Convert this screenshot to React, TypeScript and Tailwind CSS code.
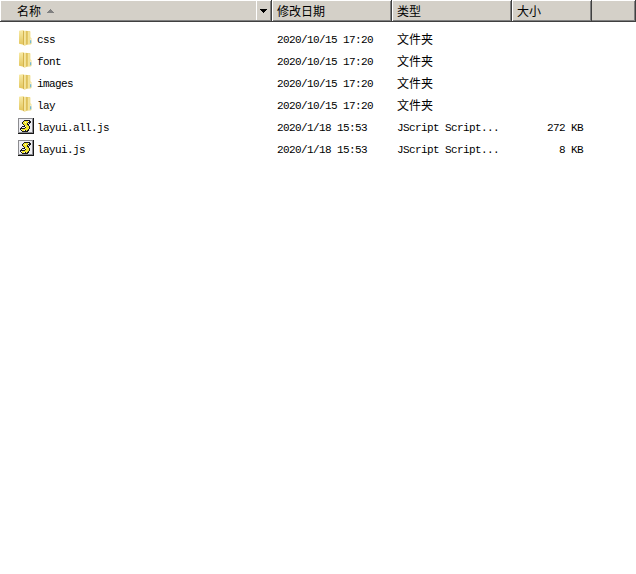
import React from "react";

type Entry = {
  name: string;
  kind: "folder" | "script";
  modified: string;
  type: string;
  size?: string;
};

const entries: Entry[] = [
  { name: "css", kind: "folder", modified: "2020/10/15 17:20", type: "文件夹" },
  { name: "font", kind: "folder", modified: "2020/10/15 17:20", type: "文件夹" },
  { name: "images", kind: "folder", modified: "2020/10/15 17:20", type: "文件夹" },
  { name: "lay", kind: "folder", modified: "2020/10/15 17:20", type: "文件夹" },
  { name: "layui.all.js", kind: "script", modified: "2020/1/18 15:53", type: "JScript Script...", size: "272 KB" },
  { name: "layui.js", kind: "script", modified: "2020/1/18 15:53", type: "JScript Script...", size: "8 KB" },
];

const bevel = "flex h-[22px] shrink-0 items-center border-b border-r border-[#404040] bg-[#d4d0c8]";
const raised = "shadow-[inset_1px_1px_0_#ffffff,inset_-1px_-1px_0_#808080]";
const raisedFlatLeft = "shadow-[inset_0_1px_0_#ffffff,inset_-1px_-1px_0_#808080]";

function FolderIcon() {
  return (
    <svg width="16" height="16" viewBox="0 0 16 16" className="block">
      <defs>
        <linearGradient id="folderFront" x1="0" y1="0" x2="0" y2="1">
          <stop offset="0" stopColor="#f8eba8" />
          <stop offset="1" stopColor="#e3c65c" />
        </linearGradient>
        <linearGradient id="folderBack" x1="0" y1="0" x2="1" y2="0">
          <stop offset="0" stopColor="#dfc25c" />
          <stop offset="1" stopColor="#f5e596" />
        </linearGradient>
      </defs>
      <path d="M1 .8 5.6 0v14.8L1 13.8Z" fill="url(#folderFront)" />
      <path d="M7 1h4.8l.6.6v5.6l1.2 1v5.6l-.6.6H7Z" fill="url(#folderBack)" />
      <path d="M5 1 6.2.4v15.2L5 14.8Z" fill="#d4b34c" />
      <path d="M6.2 1.2 8.4.4v14.5l-2.2 1Z" fill="#f3e192" />
      <path d="M8.4 1h.9v13.7h-.9Z" fill="#d6b64e" />
      <path d="M10.4 1.6h.9v12.6h-.9Z" fill="#f8edb1" />
      <path d="M12.4 8.4h.9v2h-.9Z" fill="#f4f5ed" />
      <path d="M12.2 10.2h1v3h-1Z" fill="#55b0e8" />
    </svg>
  );
}

const scroll = [
  "gggggggggggggggk",
  "gwwwwwwwwwwwwwgk",
  "gwwwwwkkkkkkwwgk",
  "gwwwwkyyyywkkwgk",
  "gwwwkyywyykkkwgk",
  "gwwwkyyyykwkwwgk",
  "gwwwwkyyykkwwwgk",
  "gwwwwwkyyykwwwgk",
  "gwwwkkkwyyykwwgk",
  "gwwkwwwkyyykwwgk",
  "gwkkkkkyyyykwwgk",
  "gwkwyyyyyykwwwgk",
  "gwwkyywkykkwwwgk",
  "gwwwkkkkkkwwwwgk",
  "gggggggggggggggk",
  "kkkkkkkkkkkkkkkk",
];
const ink: Record<string, string> = { g: "#8c8c90", k: "#181818", w: "#eeeef3", y: "#f2e62c" };

function ScriptIcon() {
  return (
    <svg width="16" height="16" viewBox="0 0 16 16" className="block" shapeRendering="crispEdges">
      {scroll.map((row, y) =>
        row.split("").map((cell, x) => <rect key={`${x}-${y}`} x={x} y={y} width="1" height="1" fill={ink[cell]} />)
      )}
    </svg>
  );
}

export default function App() {
  return (
    <div className="h-[574px] w-[636px] overflow-hidden bg-white font-['Liberation_Mono','Noto_Sans_CJK_SC',monospace] text-[11px] tracking-[-0.6px] text-black">
      <header className="flex font-['Noto_Sans_CJK_SC',sans-serif] text-[12px] leading-[22px] tracking-normal">
        <div className={`${bevel} ${raised} w-[272px] pl-[17px]`}>
          <span>名称</span>
          <svg width="7" height="4" viewBox="0 0 7 4" className="ml-[6px]" shapeRendering="crispEdges">
            <path d="M3 0h1v1h1v1h1v1h1v1H0V3h1V2h1V1h1Z" fill="#808080" />
          </svg>
          <div className="mb-px ml-auto mr-px mt-px flex h-[19px] w-[14px] items-center border-l border-white pl-[3px]">
            <svg width="7" height="4" viewBox="0 0 7 4" shapeRendering="crispEdges">
              <path d="M0 0h7v1H6v1H5v1H4v1H3V3H2V2H1V1H0Z" fill="#000" />
            </svg>
          </div>
        </div>
        <div className={`${bevel} ${raised} w-[120px] pl-[5px]`}>修改日期</div>
        <div className={`${bevel} ${raised} w-[120px] pl-[5px]`}>类型</div>
        <div className={`${bevel} ${raised} w-[80px] pl-[5px]`}>大小</div>
        <div className={`${bevel} ${raisedFlatLeft} w-[44px]`} />
      </header>
      <main className="pt-[7px]">
        {entries.map((entry) => (
          <div key={entry.name} className="flex h-[22px] items-center whitespace-pre leading-[22px]">
            <div className="flex w-[277px] items-center pl-[18px]">
              <div className="mb-1 w-[19px]">
                {entry.kind === "folder" ? <FolderIcon /> : <ScriptIcon />}
              </div>
              <span>{entry.name}</span>
            </div>
            <div className="w-[120px]">{entry.modified}</div>
            <div className={entry.kind === "folder" ? "w-[120px] pt-px text-[12px] tracking-normal" : "w-[120px]"}>
              {entry.type}
            </div>
            <div className="w-[66px] text-right">{entry.size}</div>
          </div>
        ))}
      </main>
    </div>
  );
}
